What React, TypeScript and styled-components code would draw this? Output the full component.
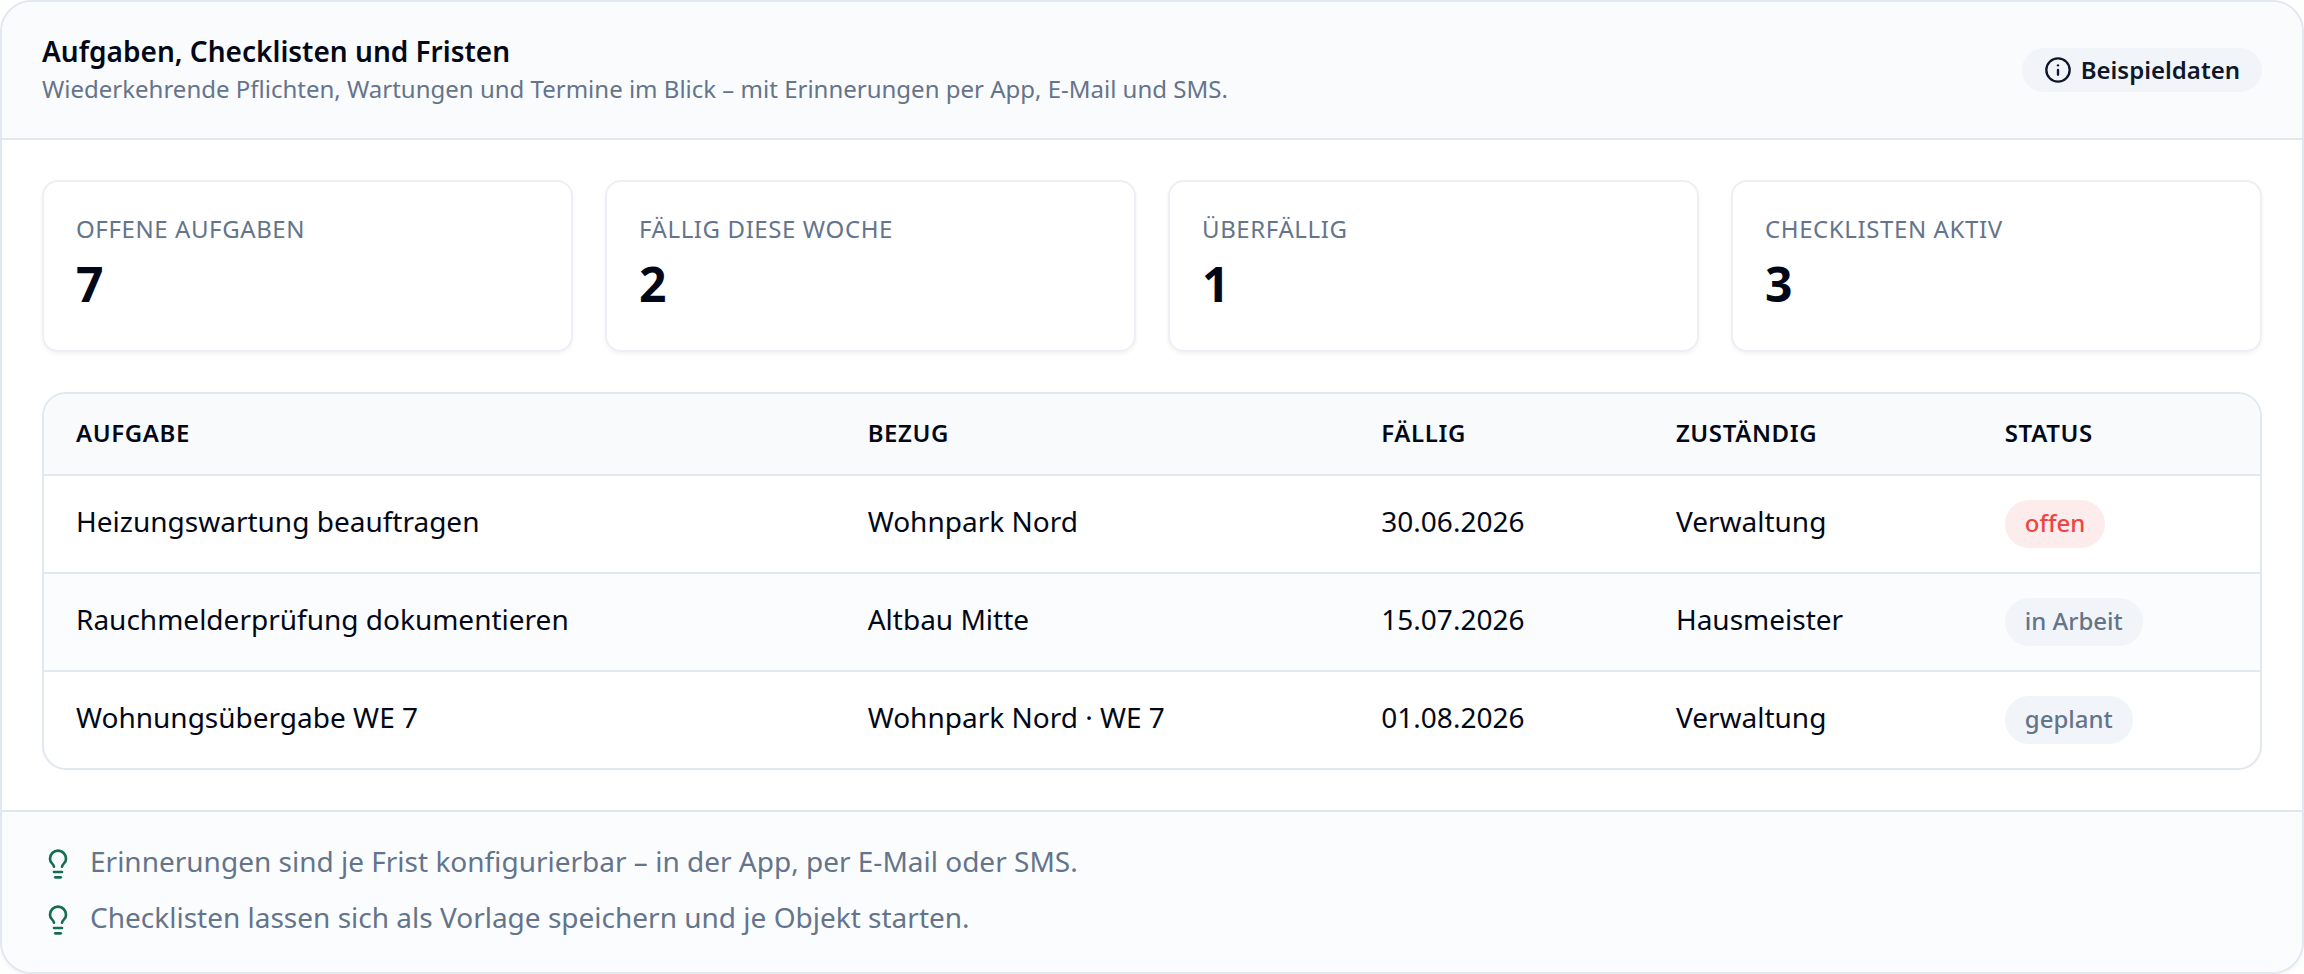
import React from "react";
import styled, { createGlobalStyle } from "styled-components";
import { Info, Lightbulb } from "lucide-react";

const GlobalStyle = createGlobalStyle`
  *, *::before, *::after { box-sizing: border-box; }
  body {
    margin: 0;
    background: #ffffff;
    color: #020817;
    font-family: "Noto Sans", sans-serif;
    font-size: 28px;
  }
`;

const Panel = styled.section`
  overflow: hidden;
  background: #ffffff;
  border: 2px solid #e2e8f0;
  border-radius: 32px;
  box-shadow: 0 2px 4px rgba(0, 0, 0, 0.05);
`;

const PanelHeader = styled.header`
  display: flex;
  align-items: center;
  justify-content: space-between;
  gap: 24px;
  padding: 32px 40px;
  background: #fafbfd;
  border-bottom: 2px solid #e2e8f0;
`;

const Heading = styled.div`
  display: flex;
  flex-direction: column;
  gap: 4px;
`;

const Title = styled.h2`
  margin: 0;
  font-size: 28px;
  line-height: 34px;
  font-weight: 600;
`;

const Subtitle = styled.p`
  margin: 0;
  font-size: 24px;
  line-height: 34px;
  color: #64748b;
`;

const SampleBadge = styled.span`
  display: inline-flex;
  flex-shrink: 0;
  align-items: center;
  gap: 9px;
  height: 44px;
  padding: 0 22px;
  border-radius: 22px;
  background: #f1f5f9;
  color: #0f172a;
  font-size: 24px;
  line-height: 34px;
  font-weight: 600;
`;

const PanelBody = styled.div`
  display: flex;
  flex-direction: column;
  gap: 40px;
  padding: 40px;
`;

const Stats = styled.dl`
  display: grid;
  grid-template-columns: repeat(4, minmax(0, 1fr));
  gap: 32px;
  margin: 0;
`;

const StatCard = styled.div`
  display: flex;
  flex-direction: column;
  gap: 6px;
  padding: 32px;
  border: 2px solid #eceff5;
  border-radius: 16px;
  box-shadow: 0 2px 4px rgba(0, 0, 0, 0.05);
`;

const StatLabel = styled.dt`
  font-size: 24px;
  line-height: 30px;
  letter-spacing: 0.025em;
  text-transform: uppercase;
  color: #64748b;
`;

const StatValue = styled.dd`
  margin: 0;
  font-size: 48px;
  line-height: 68px;
  font-weight: 700;
`;

const TableFrame = styled.div`
  overflow: hidden;
  border: 2px solid #e2e8f0;
  border-radius: 24px;
`;

const Table = styled.table`
  width: 100%;
  border-collapse: separate;
  border-spacing: 0;
`;

const HeadCell = styled.th`
  padding: 20px 32px 22px;
  background: #f8fafc;
  text-align: left;
  font-size: 24px;
  line-height: 38px;
  font-weight: 600;
  letter-spacing: 0.025em;
  text-transform: uppercase;
`;

const Row = styled.tr`
  &:nth-child(even) {
    background: #fbfcfe;
  }
`;

const Cell = styled.td`
  padding: 24px 32px;
  border-top: 2px solid #e2e8f0;
  vertical-align: top;
  font-size: 28px;
  line-height: 42px;
`;

const Status = styled.span<{ $urgent: boolean }>`
  display: flex;
  width: fit-content;
  height: 48px;
  padding: 0 20px;
  border-radius: 24px;
  background: ${(p) => (p.$urgent ? "#fdecec" : "#f1f5f9")};
  color: ${(p) => (p.$urgent ? "#ef4444" : "#64748b")};
  font-size: 24px;
  line-height: 46px;
  font-weight: 500;
  white-space: nowrap;
`;

const Hints = styled.ul`
  display: flex;
  flex-direction: column;
  gap: 20px;
  margin: 0;
  padding: 32px 40px 36px;
  list-style: none;
  background: #fbfcfe;
  border-top: 2px solid #e2e8f0;
`;

const Hint = styled.li`
  display: flex;
  align-items: flex-start;
  gap: 16px;
  font-size: 28px;
  line-height: 34px;
  color: #64748b;
`;

const HintIcon = styled(Lightbulb)`
  flex-shrink: 0;
  margin-top: 4px;
  color: #166e50;
`;

const stats = [
  { label: "Offene Aufgaben", value: 7 },
  { label: "Fällig diese Woche", value: 2 },
  { label: "Überfällig", value: 1 },
  { label: "Checklisten aktiv", value: 3 },
];

const columns = ["Aufgabe", "Bezug", "Fällig", "Zuständig", "Status"];

const tasks = [
  { task: "Heizungswartung beauftragen", ref: "Wohnpark Nord", due: "30.06.2026", owner: "Verwaltung", status: "offen" },
  { task: "Rauchmelderprüfung dokumentieren", ref: "Altbau Mitte", due: "15.07.2026", owner: "Hausmeister", status: "in Arbeit" },
  { task: "Wohnungsübergabe WE 7", ref: "Wohnpark Nord · WE 7", due: "01.08.2026", owner: "Verwaltung", status: "geplant" },
];

const hints = [
  "Erinnerungen sind je Frist konfigurierbar – in der App, per E-Mail oder SMS.",
  "Checklisten lassen sich als Vorlage speichern und je Objekt starten.",
];

export default function App() {
  return (
    <>
      <GlobalStyle />
      <Panel>
        <PanelHeader>
          <Heading>
            <Title>Aufgaben, Checklisten und Fristen</Title>
            <Subtitle>
              Wiederkehrende Pflichten, Wartungen und Termine im Blick – mit Erinnerungen per App, E-Mail und SMS.
            </Subtitle>
          </Heading>
          <SampleBadge>
            <Info size={28} aria-hidden />
            Beispieldaten
          </SampleBadge>
        </PanelHeader>
        <PanelBody>
          <Stats>
            {stats.map((s) => (
              <StatCard key={s.label}>
                <StatLabel>{s.label}</StatLabel>
                <StatValue>{s.value}</StatValue>
              </StatCard>
            ))}
          </Stats>
          <TableFrame>
            <Table>
              <thead>
                <tr>
                  {columns.map((c) => (
                    <HeadCell key={c} scope="col">{c}</HeadCell>
                  ))}
                </tr>
              </thead>
              <tbody>
                {tasks.map((t) => (
                  <Row key={t.task}>
                    <Cell>{t.task}</Cell>
                    <Cell>{t.ref}</Cell>
                    <Cell>{t.due}</Cell>
                    <Cell>{t.owner}</Cell>
                    <Cell>
                      <Status $urgent={t.status === "offen"}>{t.status}</Status>
                    </Cell>
                  </Row>
                ))}
              </tbody>
            </Table>
          </TableFrame>
        </PanelBody>
        <Hints>
          {hints.map((h) => (
            <Hint key={h}>
              <HintIcon size={32} aria-hidden />
              {h}
            </Hint>
          ))}
        </Hints>
      </Panel>
    </>
  );
}
